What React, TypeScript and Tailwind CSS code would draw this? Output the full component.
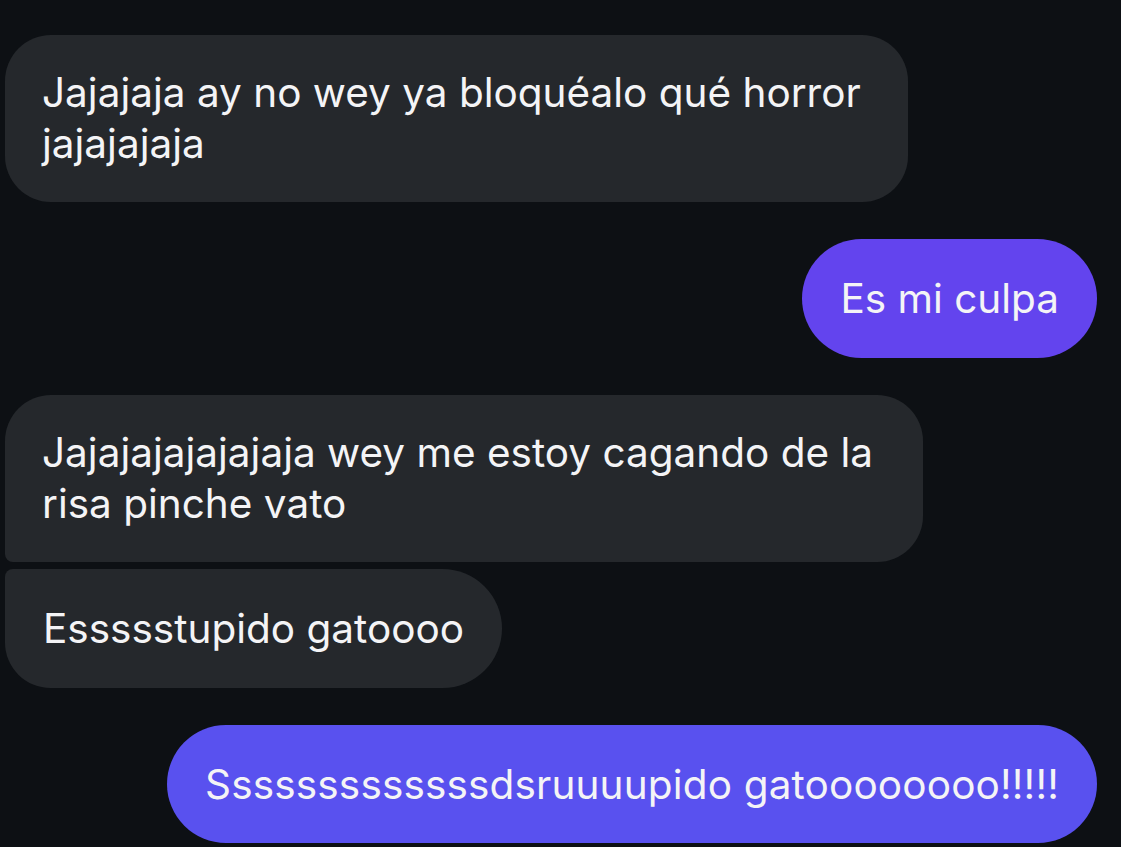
export default function App() {
  return (
    <div className="min-h-[847px] w-full bg-[#0d1014] pt-[35px] pl-[5px] pr-[24px] font-['Inter',sans-serif] text-[40.5px] leading-[51px] text-[#f4f4f6]">
      <div className="flex flex-col">
        {/* received */}
        <div className="self-start rounded-[46px] bg-[#25282c] pt-[32px] pb-[33px] pl-[37px] pr-[47px]">
          Jajajaja ay no wey ya bloquéalo qué horror
          <br />
          jajajajaja
        </div>

        {/* sent */}
        <div className="mt-[37px] self-end rounded-full bg-[#6344ee] pt-[34px] pb-[34px] px-[38px]">
          Es mi culpa
        </div>

        {/* received group */}
        <div className="mt-[37px] self-start rounded-[46px] rounded-bl-[8px] bg-[#25282c] pt-[32px] pb-[33px] pl-[37px] pr-[50px]">
          Jajajajajajajaja wey me estoy cagando de la
          <br />
          risa pinche vato
        </div>
        <div className="mt-[7px] self-start rounded-tl-[8px] rounded-bl-[46px] rounded-tr-[60px] rounded-br-[60px] bg-[#25282c] pt-[34px] pb-[34px] px-[38px]">
          Essssstupido gatoooo
        </div>

        {/* sent */}
        <div className="mt-[37px] self-end rounded-full bg-[#5951ef] pt-[34px] pb-[33px] px-[38px]">
          <span className="tracking-[0.15px]">Sssssssssssssdsruuuupido gatoooooooo!!!!!</span>
        </div>
      </div>
    </div>
  );
}
